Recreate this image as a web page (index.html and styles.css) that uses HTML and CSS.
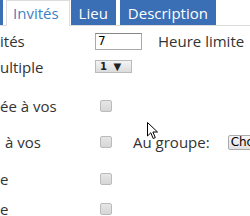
FILE: index.html
```html
<!DOCTYPE html>
<html lang="fr">
<head>
  <meta charset="UTF-8">
  <title>Invitations</title>
  <link rel="stylesheet" href="styles.css">
</head>
<body>
  <!-- Onglets -->
  <div class="onglets">
    <div class="onglet bleu bout"></div>
    <div class="onglet actif">Invités</div>
    <div class="onglet bleu">Lieu</div>
    <div class="onglet bleu">Description</div>
  </div>

  <!-- Formulaire -->
  <div class="form">
    <div class="ligne l1">
      <span class="label">ités</span>
      <input class="champ" type="text" value="7">
      <span class="extra heure">Heure limite</span>
    </div>
    <div class="ligne l2">
      <span class="label">ultiple</span>
      <span class="choix">1 ▼</span>
    </div>
    <div class="ligne l3">
      <span class="label">ée à vos</span>
      <input class="case" type="checkbox">
    </div>
    <div class="ligne l4">
      <span class="label decale">à vos</span>
      <input class="case" type="checkbox">
      <span class="extra groupe">Au groupe:</span>
      <button class="bouton">Choisir</button>
    </div>
    <div class="ligne l5">
      <span class="label">e</span>
      <input class="case" type="checkbox">
    </div>
    <div class="ligne l6">
      <span class="label">e</span>
      <input class="case" type="checkbox">
    </div>
  </div>

  <svg class="curseur" width="12" height="18" viewBox="0 0 12 18">
    <path d="M0.5 0.5 L0.5 14 L3.8 10.8 L6.2 16.5 L8.3 15.6 L5.9 10 L10.5 10 Z" fill="#fff" stroke="#000" stroke-width="1"/>
  </svg>
</body>
</html>
```

FILE: styles.css
```css
body, html {
  margin: 0;
  padding: 0;
  width: 100%;
  height: 100%;
  overflow: hidden;
  background: #fff;
  font-family: 'Open Sans', sans-serif;
  color: #333;
}

/* Onglets */
.onglets {
  display: flex;
  gap: 4px;
  height: 25px;
  border-bottom: 1px solid #ddd;
  white-space: nowrap;
}

.onglet {
  font-size: 15px;
  line-height: 20px;
  padding: 3px 8px 2px 8px;
}

.bleu {
  background: #3a6eb5;
  color: #fff;
}

.bout {
  width: 3px;
  padding: 0;
}

.actif {
  background: #fff;
  color: #3f7fbf;
  border: 1px solid #ddd;
  border-bottom: none;
  margin: 0 -3px 0 -1px;
  padding: 2px 10px 3px 6px;
  height: 20px;
}

/* Formulaire */
.form {
  font-size: 15px;
  white-space: nowrap;
}

.ligne {
  display: flex;
  align-items: center;
  height: 26px;
}

.ligne > * {
  flex: none;
}

.l1 { margin-top: 2px; }
.l3 { margin-top: 13px; }
.l4 { margin-top: 10px; }
.l5 { margin-top: 11px; }
.l6 { margin-top: 4px; }

.label {
  width: 95px;
}

.decale {
  padding-left: 5px;
  width: 90px;
}

.champ {
  width: 41px;
  height: 13px;
  margin: 0;
  padding: 1px 2px;
  border: 1px solid #aaa;
  border-top-color: #888;
  font-family: 'DejaVu Sans', sans-serif;
  font-size: 12px;
  color: #000;
}

.heure {
  margin-left: 16px;
}

.choix {
  width: 31px;
  height: 11px;
  line-height: 11px;
  border: 1px solid #bbb;
  background: linear-gradient(#f4f4f4, #dcdcdc);
  font-family: 'DejaVu Sans', sans-serif;
  font-size: 10px;
  font-weight: bold;
  color: #222;
  padding-left: 4px;
  word-spacing: 3px;
  margin-top: -2px;
}

.case {
  appearance: none;
  -webkit-appearance: none;
  width: 12px;
  height: 12px;
  margin: 0 0 0 5px;
  border: 1px solid #bbb;
  border-radius: 2px;
  background: linear-gradient(#e6e6e6, #d6d6d6);
  box-sizing: border-box;
}

.groupe {
  margin-left: 21px;
}

.bouton {
  margin-left: 18px;
  height: 15px;
  padding: 0 2px;
  border: 1px solid #aaa;
  border-radius: 2px;
  background: linear-gradient(#f6f6f6, #e2e2e2);
  font-family: 'DejaVu Sans', sans-serif;
  font-size: 12px;
  line-height: 13px;
  color: #000;
}

/* curseur de la souris */
.curseur {
  position: absolute;
  left: 147px;
  top: 122px;
}
```
